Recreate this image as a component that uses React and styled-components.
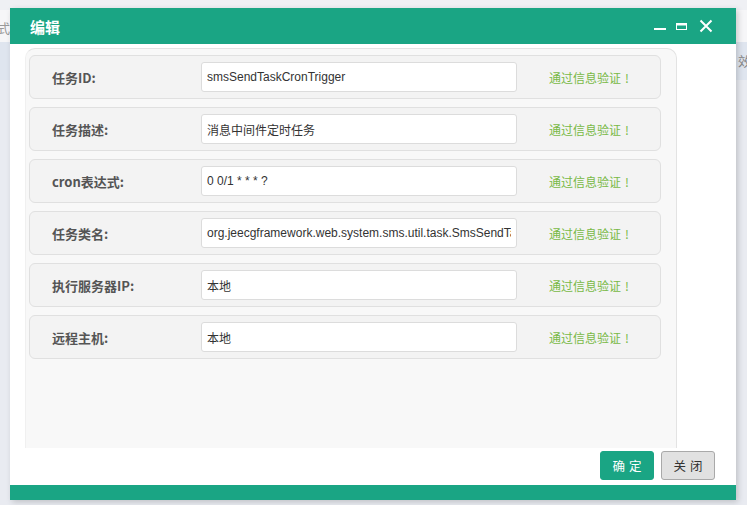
import React from "react";
import styled, { createGlobalStyle } from "styled-components";

const GlobalStyle = createGlobalStyle`
  html, body {
    margin: 0;
    padding: 0;
    background: #e9ebf1;
    font-family: "Liberation Sans", "Noto Sans CJK SC", sans-serif;
  }
`;

const Page = styled.div`
  position: relative;
  width: 747px;
  height: 505px;
  overflow: hidden;
  background: #e9ebf1;
`;

const Backdrop = styled.div`
  display: flex;
  flex-direction: column;
  height: 100%;
`;

const BackTop = styled.div`
  height: 10px;
  background: #eff0f4;
`;

const BackHead = styled.div`
  height: 32px;
  display: flex;
  align-items: center;
  background: #f6f6f8;
  color: #999;
  font-size: 13px;
  font-family: "Noto Sans CJK SC", sans-serif;

  > span {
    margin-left: -3px;
    margin-top: 2px;
  }
`;

const BackRow = styled.div`
  height: 38px;
  display: flex;
  align-items: center;
  justify-content: flex-end;
  background: #dfe5ef;
  color: #888;
  font-size: 13px;
  font-family: "Noto Sans CJK SC", sans-serif;

  > span {
    margin-right: -4px;
    margin-top: -2px;
  }
`;

const Dialog = styled.div`
  position: absolute;
  left: 10px;
  top: 8px;
  width: 726px;
  height: 492px;
  display: flex;
  flex-direction: column;
  background: #fff;
  box-shadow: 2px 2px 6px rgba(0, 0, 0, 0.18);
`;

const Header = styled.div`
  height: 36px;
  flex: none;
  display: flex;
  align-items: center;
  padding: 0 23px 0 20px;
  background: #1aa584;

  > h3 {
    flex: 1;
    margin: 0;
    color: #fff;
    font-size: 15px;
    font-weight: 700;
    font-family: "Noto Sans CJK SC", sans-serif;
  }
`;

const Tools = styled.div`
  display: flex;
  align-items: center;
  gap: 10px;

  svg {
    display: block;
  }
`;

const Body = styled.div`
  flex: 1;
  display: flex;
  flex-direction: column;
  padding: 4px 0 0 15px;
  min-height: 0;
`;

const Panel = styled.div`
  width: 652px;
  height: 400px;
  box-sizing: border-box;
  padding: 6px 0 0 3px;
  background: #f8f8f8;
  border: 1px solid #e3e3e3;
  border-left-color: #f0f0f0;
  border-bottom: none;
  border-radius: 10px 10px 0 0;
  display: flex;
  flex-direction: column;
  gap: 8px;
`;

const Row = styled.div`
  width: 632px;
  height: 44px;
  box-sizing: border-box;
  display: flex;
  align-items: center;
  background: #f3f3f3;
  border: 1px solid #e0e0e0;
  border-radius: 6px;
`;

const Label = styled.label`
  width: 149px;
  padding-left: 22px;
  flex: none;
  color: #555;
  font-size: 13px;
  font-weight: 700;
  font-family: "Noto Sans CJK SC", sans-serif;
`;

const Input = styled.input`
  width: 316px;
  height: 30px;
  box-sizing: border-box;
  padding: 0 5px;
  border: 1px solid #dcdcdc;
  border-radius: 3px;
  background: #fff;
  color: #333;
  font-size: 12px;
  font-family: "Liberation Sans", "Noto Sans CJK SC", sans-serif;
  outline: none;
`;

const Valid = styled.span`
  margin-left: 32px;
  color: #78b946;
  font-size: 12px;
  font-family: "Noto Sans CJK SC", sans-serif;

  > i {
    font-style: normal;
    margin-left: 4px;
  }
`;

const Footer = styled.div`
  flex: 1;
  display: flex;
  justify-content: flex-end;
  align-items: flex-start;
  gap: 7px;
  padding: 3px 21px 0 0;
`;

const Button = styled.button`
  width: 54px;
  height: 29px;
  box-sizing: border-box;
  border-radius: 3px;
  font-size: 12.5px;
  letter-spacing: 4px;
  padding: 0 0 0 4px;
  font-family: "Noto Sans CJK SC", sans-serif;
  cursor: pointer;
  background: ${(p) => (p.$primary ? "#1aa584" : "#e1e1e1")};
  color: ${(p) => (p.$primary ? "#fff" : "#333")};
  border: 1px solid ${(p) => (p.$primary ? "#1aa584" : "#a9a9a9")};
`;

const BottomBar = styled.div`
  height: 15px;
  flex: none;
  background: #1aa584;
`;

const fields = [
  { label: "任务ID:", value: "smsSendTaskCronTrigger" },
  { label: "任务描述:", value: "消息中间件定时任务" },
  { label: "cron表达式:", value: "0 0/1 * * * ?" },
  { label: "任务类名:", value: "org.jeecgframework.web.system.sms.util.task.SmsSendTask" },
  { label: "执行服务器IP:", value: "本地" },
  { label: "远程主机:", value: "本地" },
];

export default function App() {
  return (
    <>
      <GlobalStyle />
      <Page>
        <Backdrop>
          <BackTop />
          <BackHead>
            <span>式</span>
          </BackHead>
          <BackRow>
            <span>效</span>
          </BackRow>
        </Backdrop>

        <Dialog>
          <Header>
            <h3>编辑</h3>
            <Tools>
              <svg width="12" height="12" viewBox="0 0 12 12">
                <rect x="0" y="8" width="12" height="2" fill="#fff" />
              </svg>
              <svg width="11" height="12" viewBox="0 0 11 12">
                <rect x="0.5" y="3.5" width="10" height="6" fill="none" stroke="#fff" />
                <rect x="0" y="3" width="11" height="2.5" fill="#fff" />
              </svg>
              <svg width="14" height="14" viewBox="0 0 14 14" style={{ marginLeft: 2 }}>
                <path d="M1.5 1.5 L12.5 12.5 M12.5 1.5 L1.5 12.5" stroke="#fff" strokeWidth="2" />
              </svg>
            </Tools>
          </Header>

          <Body>
            <Panel>
              {fields.map((f) => (
                <Row key={f.label}>
                  <Label>{f.label}</Label>
                  <Input defaultValue={f.value} readOnly />
                  <Valid>
                    通过信息验证<i>!</i>
                  </Valid>
                </Row>
              ))}
            </Panel>
            <Footer>
              <Button $primary>确定</Button>
              <Button>关闭</Button>
            </Footer>
          </Body>

          <BottomBar />
        </Dialog>
      </Page>
    </>
  );
}
